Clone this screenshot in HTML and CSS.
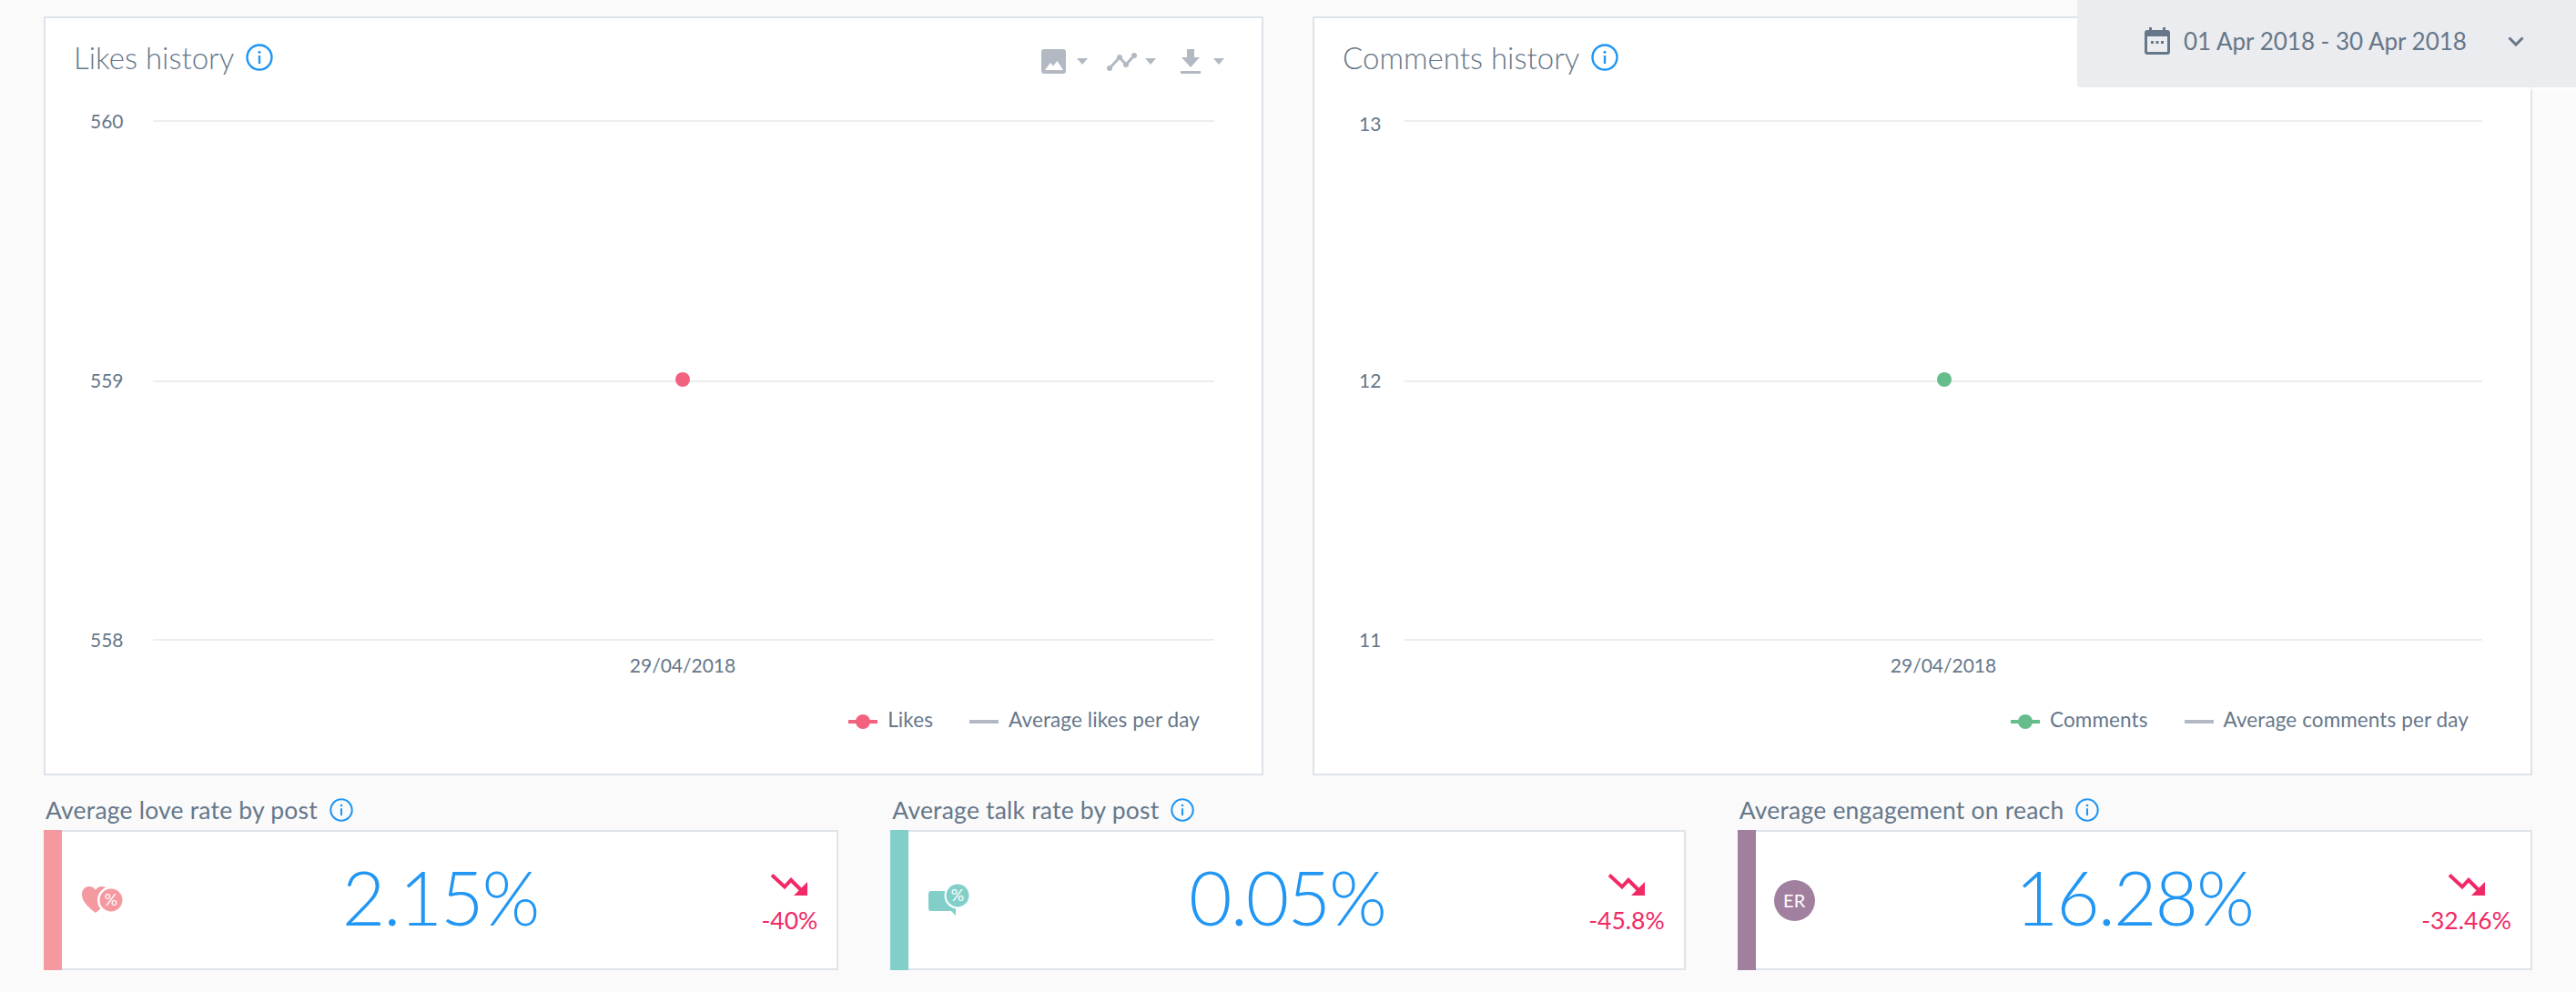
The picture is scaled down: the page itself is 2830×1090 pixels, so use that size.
FILE: index.html
```html
<!DOCTYPE html>
<html lang="en">
<head>
    <meta charset="UTF-8">
    <title>Post analytics</title>
    <link rel="stylesheet" href="styles.css">
</head>
<body>
    <svg class="defs" width="0" height="0">
        <symbol id="info" viewBox="0 0 30 30">
            <circle cx="15" cy="15" r="13.5" fill="none" stroke="currentColor" stroke-width="2.4"/>
            <rect x="13.8" y="13" width="2.4" height="9" fill="currentColor"/>
            <circle cx="15" cy="9.3" r="1.5" fill="currentColor"/>
        </symbol>
        <symbol id="trend" viewBox="0 0 40 24">
            <path d="M1 1.5 L15 14.5 L22 7 L35 20" fill="none" stroke="currentColor" stroke-width="4"/>
            <path d="M40 9 V24 H25 Z" fill="currentColor"/>
        </symbol>
    </svg>

    <div class="date-picker">
        <svg class="date-icon" width="28" height="30" viewBox="0 0 28 30">
            <path d="M5 0h3v3h12V0h3v3h2a3 3 0 0 1 3 3v21a3 3 0 0 1-3 3H3a3 3 0 0 1-3-3V6a3 3 0 0 1 3-3h2z" fill="#66778a"/>
            <rect x="3" y="10" width="22" height="17" fill="#ebecef"/>
            <rect x="7" y="15" width="3" height="3" fill="#66778a"/>
            <rect x="12.5" y="15" width="3" height="3" fill="#66778a"/>
            <rect x="18" y="15" width="3" height="3" fill="#66778a"/>
        </svg>
        <span class="date-text">01 Apr 2018 - 30 Apr 2018</span>
        <svg class="date-chevron" width="18" height="11" viewBox="0 0 18 11">
            <path d="M1.5 1.5 L9 9 L16.5 1.5" fill="none" stroke="#66778a" stroke-width="3"/>
        </svg>
    </div>

    <div class="charts">
        <div class="chart-card">
            <div class="chart-head">
                <h2 class="chart-title">Likes history <svg class="info info-lg"><use href="#info"/></svg></h2>
                <div class="toolbar">
                    <div class="tool">
                        <svg width="27" height="27" viewBox="0 0 27 27">
                            <rect width="27" height="27" rx="3" fill="#b3b9c2"/>
                            <path d="M4 23 L10 15 L13 18.5 L17.5 13 L24 23 Z" fill="#fff"/>
                        </svg>
                        <span class="caret"></span>
                    </div>
                    <div class="tool tool-line">
                        <svg width="33" height="20" viewBox="0 0 33 20">
                            <path d="M3 17 L14 5 L21 13 L30 3" fill="none" stroke="#b3b9c2" stroke-width="3"/>
                            <circle cx="3" cy="17" r="3" fill="#b3b9c2"/>
                            <circle cx="14" cy="5" r="3" fill="#b3b9c2"/>
                            <circle cx="21" cy="13" r="3" fill="#b3b9c2"/>
                            <circle cx="30" cy="3" r="3" fill="#b3b9c2"/>
                        </svg>
                        <span class="caret"></span>
                    </div>
                    <div class="tool tool-save">
                        <svg width="22" height="27" viewBox="0 0 22 27">
                            <path d="M7 0 H15 V9 H21 L11 20 L1 9 H7 Z" fill="#b3b9c2"/>
                            <rect y="24" width="22" height="3" fill="#b3b9c2"/>
                        </svg>
                        <span class="caret"></span>
                    </div>
                </div>
            </div>
            <svg class="plot" viewBox="0 0 1336 670">
                <line class="grid-line" x1="118" x2="1284" y1="53" y2="53"/>
                <line class="grid-line" x1="118" x2="1284" y1="339" y2="339"/>
                <line class="grid-line" x1="118" x2="1284" y1="623" y2="623"/>
                <text class="axis-label" x="49" y="61">560</text>
                <text class="axis-label" x="49" y="346">559</text>
                <text class="axis-label" x="49" y="631">558</text>
                <text class="axis-label axis-x" x="700" y="659">29/04/2018</text>
                <circle cx="700" cy="337" r="8" fill="#f2627f"/>
            </svg>
            <div class="legend">
                <span class="legend-item"><span class="marker marker-likes"></span>Likes</span>
                <span class="legend-item"><span class="marker"></span>Average likes per day</span>
            </div>
        </div>

        <div class="chart-card">
            <div class="chart-head">
                <h2 class="chart-title">Comments history <svg class="info info-lg"><use href="#info"/></svg></h2>
            </div>
            <svg class="plot" viewBox="0 0 1336 670">
                <line class="grid-line" x1="99" x2="1283" y1="53" y2="53"/>
                <line class="grid-line" x1="99" x2="1283" y1="339" y2="339"/>
                <line class="grid-line" x1="99" x2="1283" y1="623" y2="623"/>
                <text class="axis-label" x="49" y="64">13</text>
                <text class="axis-label" x="49" y="346">12</text>
                <text class="axis-label" x="49" y="631">11</text>
                <text class="axis-label axis-x" x="691" y="659">29/04/2018</text>
                <circle cx="692" cy="337" r="8" fill="#66bd8c"/>
            </svg>
            <div class="legend">
                <span class="legend-item"><span class="marker marker-comments"></span>Comments</span>
                <span class="legend-item"><span class="marker"></span>Average comments per day</span>
            </div>
        </div>
    </div>

    <div class="stats">
        <div class="stat">
            <div class="stat-label">Average love rate by post <svg class="info"><use href="#info"/></svg></div>
            <div class="stat-card">
                <div class="stat-bar bar-love"></div>
                <div class="stat-body">
                    <svg class="stat-icon" width="46" height="30" viewBox="0 0 46 30">
                        <path d="M15 29 C6 22 0 16 0 9 C0 3 4 0 8 0 C11 0 13.500 1.500 15 4 C16.500 1.500 19 0 22 0 C26 0 30 3 29 9 C28 16 24 22 15 29 Z" fill="#f599a0"/>
                        <circle cx="32" cy="15" r="15" fill="#fff"/>
                        <circle cx="32" cy="15" r="12.500" fill="#f599a0"/>
                        <text class="icon-pct" x="32" y="21">%</text>
                    </svg>
                    <div class="stat-value">2.15%</div>
                    <div class="trend">
                        <svg class="trend-icon"><use href="#trend"/></svg>
                        <span class="trend-text">-40%</span>
                    </div>
                </div>
            </div>
        </div>

        <div class="stat">
            <div class="stat-label">Average talk rate by post <svg class="info"><use href="#info"/></svg></div>
            <div class="stat-card">
                <div class="stat-bar bar-talk"></div>
                <div class="stat-body">
                    <svg class="stat-icon" width="46" height="36" viewBox="0 0 46 36">
                        <path d="M3 8 H30 V30 L30 35 L25 30 H3 A3 3 0 0 1 0 27 V11 A3 3 0 0 1 3 8 Z" fill="#82cfca"/>
                        <circle cx="32" cy="13" r="14.500" fill="#fff"/>
                        <circle cx="32" cy="13" r="12.500" fill="#82cfca"/>
                        <text class="icon-pct" x="32" y="19">%</text>
                    </svg>
                    <div class="stat-value">0.05%</div>
                    <div class="trend">
                        <svg class="trend-icon"><use href="#trend"/></svg>
                        <span class="trend-text">-45.8%</span>
                    </div>
                </div>
            </div>
        </div>

        <div class="stat">
            <div class="stat-label">Average engagement on reach <svg class="info"><use href="#info"/></svg></div>
            <div class="stat-card">
                <div class="stat-bar bar-reach"></div>
                <div class="stat-body">
                    <div class="er-badge">ER</div>
                    <div class="stat-value">16.28%</div>
                    <div class="trend">
                        <svg class="trend-icon"><use href="#trend"/></svg>
                        <span class="trend-text">-32.46%</span>
                    </div>
                </div>
            </div>
        </div>
    </div>
</body>
</html>
```

FILE: styles.css
```css
html, body {
    margin: 0;
    padding: 0;
    height: 100%;
}

body {
    position: relative;
    box-sizing: border-box;
    padding: 18px 48px 0;
    background: #fafafa;
    color: #66778a;
    font-family: Lato, "Open Sans", sans-serif;
    overflow: hidden;
}

.defs {
    position: absolute;
}

.date-picker {
    position: absolute;
    top: 0;
    right: 0;
    width: 548px;
    height: 96px;
    box-sizing: border-box;
    padding: 0 57px 6px 74px;
    display: flex;
    align-items: center;
    background: #ebecef;
    border-bottom-left-radius: 4px;
    box-shadow: 0 4px 0 rgba(255, 255, 255, 0.6);
}

.date-text {
    margin-left: 15px;
    font-size: 26px;
    white-space: nowrap;
}

.date-chevron {
    margin-left: auto;
}

.charts {
    display: grid;
    grid-template-columns: 1fr 1fr;
    gap: 54px;
}

.chart-card {
    height: 834px;
    box-sizing: border-box;
    background: #fff;
    border: 2px solid #dfe3ea;
}

.chart-head {
    height: 60px;
    box-sizing: border-box;
    padding: 27px 41px 0 31px;
    display: flex;
    justify-content: space-between;
}

.chart-title {
    margin: 0;
    display: flex;
    align-items: center;
    gap: 13px;
    height: 32px;
    font-size: 33px;
    font-weight: 300;
    white-space: nowrap;
}

.info {
    width: 26px;
    height: 26px;
    color: #2196f3;
    flex: none;
}

.info-lg {
    width: 30px;
    height: 30px;
}

.toolbar {
    display: flex;
    gap: 21px;
    margin-top: 7px;
}

.tool {
    display: flex;
    align-items: center;
    gap: 12px;
    height: 27px;
}

.tool-line {
    gap: 9px;
    margin-right: 6px;
}

.tool-save {
    gap: 14px;
}

.caret {
    width: 0;
    height: 0;
    border-left: 6.5px solid transparent;
    border-right: 6.5px solid transparent;
    border-top: 7px solid #b3b9c2;
}

.plot {
    display: block;
    width: 100%;
    height: 670px;
}

.grid-line {
    stroke: #ebedf1;
    stroke-width: 2;
}

.axis-label {
    fill: #66778a;
    font-size: 21px;
}

.axis-x {
    text-anchor: middle;
}

.legend {
    margin-top: 27px;
    padding-right: 68px;
    display: flex;
    justify-content: flex-end;
    gap: 40px;
    font-size: 22.5px;
    letter-spacing: 0.1px;
    line-height: 28px;
}

.legend-item {
    display: flex;
    align-items: center;
    gap: 11px;
    white-space: nowrap;
}

.marker {
    position: relative;
    width: 32px;
    height: 4px;
    margin-top: 4px;
    background: #b3b9c2;
}

.marker-likes,
.marker-likes::after {
    background: #f2627f;
}

.marker-comments,
.marker-comments::after {
    background: #66bd8c;
}

.marker-likes::after,
.marker-comments::after {
    content: "";
    position: absolute;
    left: 8px;
    top: -6px;
    width: 16px;
    height: 16px;
    border-radius: 50%;
}

.stats {
    margin-top: 25px;
    display: grid;
    grid-template-columns: repeat(3, 1fr);
    gap: 57px;
}

.stat-label {
    display: flex;
    align-items: center;
    gap: 13px;
    height: 26px;
    margin-bottom: 9px;
    padding-left: 2px;
    font-size: 26.5px;
    letter-spacing: 0.2px;
    white-space: nowrap;
}

.stat-card {
    display: flex;
    height: 154px;
}

.stat-bar {
    width: 20px;
    flex: none;
}

.bar-love {
    background: #f599a0;
}

.bar-talk {
    background: #82cfca;
}

.bar-reach {
    background: #a07f9f;
}

.stat-body {
    flex: 1;
    position: relative;
    display: grid;
    grid-template-columns: 70px 1fr 90px;
    align-items: center;
    box-sizing: border-box;
    background: #fff;
    border: 2px solid #dfe3ea;
    border-left: 0;
}

.stat-icon {
    margin-left: 22px;
}

.icon-pct {
    fill: #fff;
    font-size: 18px;
    text-anchor: middle;
}

.er-badge {
    width: 45px;
    height: 45px;
    margin-left: 20px;
    border-radius: 50%;
    background: #a07f9f;
    color: #fff;
    font-size: 20px;
    line-height: 45px;
    text-align: center;
}

.stat-value {
    margin-top: -8px;
    color: #2196f3;
    font-size: 82px;
    font-weight: 300;
    letter-spacing: -2px;
    line-height: 1;
    text-align: center;
}

.trend {
    justify-self: end;
    margin-right: 21px;
    margin-top: 6px;
    display: flex;
    flex-direction: column;
    align-items: center;
    gap: 14px;
    color: #f12a66;
}

.trend-icon {
    width: 40px;
    height: 24px;
}

.trend-text {
    font-size: 26.5px;
    line-height: 26px;
    white-space: nowrap;
}
```
